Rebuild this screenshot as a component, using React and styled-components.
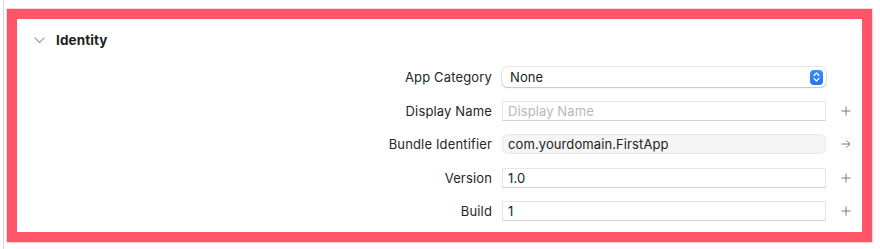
import React from "react";
import styled, { createGlobalStyle } from "styled-components";

const GlobalStyle = createGlobalStyle`
  html, body {
    margin: 0;
    padding: 0;
    background: #ffffff;
  }
  body {
    font-family: "Inter", "Liberation Sans", sans-serif;
    -webkit-font-smoothing: antialiased;
  }
`;

// --- Page shell ---

const Page = styled.div`
  width: 880px;
  height: 249px;
  box-sizing: border-box;
  padding: 9px 8px 7px 7px;
  position: relative;
  &::before {
    content: "";
    position: absolute;
    left: 3px;
    top: 0;
    bottom: 0;
    width: 1px;
    background: #d6d6d6;
  }
`;

const Frame = styled.section`
  box-sizing: border-box;
  width: 865px;
  height: 233px;
  border: 10px solid #fe5568;
  box-shadow: 0 0 0 1px rgba(254, 85, 104, 0.25);
  background: #ffffff;
  display: flex;
  flex-direction: column;
`;

// --- Section header ---

const Header = styled.div`
  display: flex;
  align-items: center;
  gap: 11px;
  height: 16px;
  padding: 13px 0 0 17px;
`;

const Title = styled.h2`
  margin: 0;
  font-size: 13.5px;
  font-weight: 700;
  color: #1e1e1e;
  letter-spacing: 0.1px;
`;

// --- Rows ---

const Rows = styled.div`
  display: grid;
  grid-template-columns: 1fr 324px 36px;
  row-gap: 13.5px;
  margin-top: 19px;
`;

const Label = styled.div`
  height: 20px;
  display: flex;
  align-items: center;
  justify-content: flex-end;
  padding-right: 10px;
  font-size: 13px;
  letter-spacing: 0.15px;
  color: #262626;
`;

const Field = styled.div`
  box-sizing: border-box;
  height: 20px;
  display: flex;
  align-items: center;
  padding: 0 5px;
  font-size: 13px;
  letter-spacing: 0.1px;
  color: ${({ $placeholder }) => ($placeholder ? "#b8b8b8" : "#222222")};
  background: ${({ $readonly }) => ($readonly ? "#f5f5f5" : "#ffffff")};
  border: 1px solid ${({ $readonly }) => ($readonly ? "#e8e8e8" : "#e6e6e6")};
  border-bottom-color: ${({ $readonly }) => ($readonly ? "#e8e8e8" : "#d2d2d2")};
  border-radius: ${({ $readonly }) => ($readonly ? "6px" : "0")};
`;

const Popup = styled.div`
  box-sizing: border-box;
  height: 20px;
  display: flex;
  align-items: center;
  justify-content: space-between;
  padding: 0 3px 0 8px;
  font-size: 13px;
  letter-spacing: 0.1px;
  color: #222222;
  background: #ffffff;
  border-radius: 5px;
  box-shadow: 0 0 0 0.5px rgba(0, 0, 0, 0.18), 0 1px 1.5px rgba(0, 0, 0, 0.16);
`;

const Stepper = styled.span`
  width: 13px;
  height: 15px;
  border-radius: 4px;
  background: linear-gradient(#3a8ffb, #1b74f3);
  display: flex;
  align-items: center;
  justify-content: center;
`;

const Accessory = styled.div`
  height: 20px;
  display: flex;
  align-items: center;
  padding-left: 15px;
`;

const Chevron = () => (
  <svg width="11" height="7" viewBox="0 0 11 7">
    <path d="M1 1l4.5 4.5L10 1" fill="none" stroke="#a6a6a6" strokeWidth="1.3" strokeLinecap="round" strokeLinejoin="round" />
  </svg>
);

const UpDown = () => (
  <svg width="7" height="10" viewBox="0 0 7 10">
    <path d="M1 3.5L3.5 1L6 3.5M1 6.5L3.5 9L6 6.5" fill="none" stroke="#ffffff" strokeWidth="1.2" strokeLinecap="round" strokeLinejoin="round" />
  </svg>
);

const Plus = () => (
  <svg width="10" height="10" viewBox="0 0 10 10">
    <path d="M5 0.5v9M0.5 5h9" stroke="#7a7a7a" strokeWidth="1" />
  </svg>
);

const Arrow = () => (
  <svg width="10" height="10" viewBox="0 0 10 10">
    <path d="M0.5 5h8.5M5.5 1.5L9 5l-3.5 3.5" fill="none" stroke="#7a7a7a" strokeWidth="1" />
  </svg>
);

const fields = [
  { label: "Display Name", value: "Display Name", placeholder: true, icon: "plus" },
  { label: "Bundle Identifier", value: "com.yourdomain.FirstApp", readonly: true, icon: "arrow" },
  { label: "Version", value: "1.0", icon: "plus" },
  { label: "Build", value: "1", icon: "plus" },
];

const App = () => {
  return (
    <>
      <GlobalStyle />
      <Page>
        <Frame>
          <Header>
            <Chevron />
            <Title>Identity</Title>
          </Header>
          <Rows>
            <Label>App Category</Label>
            <Popup>
              None
              <Stepper>
                <UpDown />
              </Stepper>
            </Popup>
            <Accessory />
            {fields.map((f) => (
              <React.Fragment key={f.label}>
                <Label>{f.label}</Label>
                <Field $placeholder={f.placeholder} $readonly={f.readonly}>
                  {f.value}
                </Field>
                <Accessory>{f.icon === "arrow" ? <Arrow /> : <Plus />}</Accessory>
              </React.Fragment>
            ))}
          </Rows>
        </Frame>
      </Page>
    </>
  );
};

export default App;
